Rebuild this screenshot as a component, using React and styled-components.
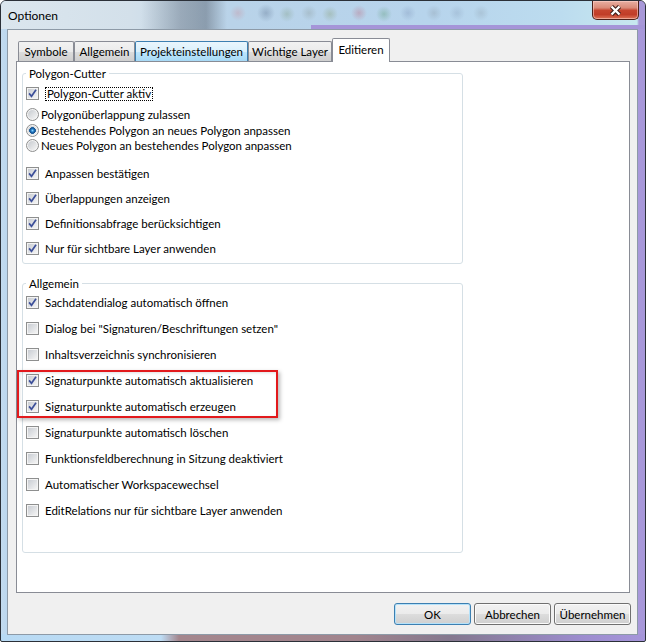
import React from "react";
import styled, { createGlobalStyle } from "styled-components";

const GlobalStyle = createGlobalStyle`
  html, body {
    margin: 0;
    padding: 0;
    background: #ffffff;
  }
  body {
    font-family: Lato, "Noto Sans", "Liberation Sans", sans-serif;
    font-size: 11.5px;
    color: #000;
  }
  *, *::before, *::after {
    box-sizing: border-box;
  }
`;

const tabs = [
  { label: "Symbole", w: 56 },
  { label: "Allgemein", w: 61 },
  { label: "Projekteinstellungen", w: 113, hover: true },
  { label: "Wichtige Layer", w: 84 },
  { label: "Editieren", w: 58, active: true },
];

const radios = [
  { label: "Polygonüberlappung zulassen" },
  { label: "Bestehendes Polygon an neues Polygon anpassen", on: true },
  { label: "Neues Polygon an bestehendes Polygon anpassen" },
];

const cutterChecks = [
  "Anpassen bestätigen",
  "Überlappungen anzeigen",
  "Definitionsabfrage berücksichtigen",
  "Nur für sichtbare Layer anwenden",
];

const generalTop = [
  { label: "Sachdatendialog automatisch öffnen", on: true },
  { label: 'Dialog bei "Signaturen/Beschriftungen setzen"' },
  { label: "Inhaltsverzeichnis synchronisieren" },
];

const generalMarked = [
  { label: "Signaturpunkte automatisch aktualisieren", on: true },
  { label: "Signaturpunkte automatisch erzeugen", on: true },
];

const generalRest = [
  { label: "Signaturpunkte automatisch löschen" },
  { label: "Funktionsfeldberechnung in Sitzung deaktiviert" },
  { label: "Automatischer Workspacewechsel" },
  { label: "EditRelations nur für sichtbare Layer anwenden" },
];

const Check = ({ on }) => (
  <CheckBox>
    {on && (
      <svg width="9" height="9" viewBox="0 0 9 9">
        <path
          d="M1.1 4.4 L3.5 7.3 L8 0.8"
          fill="none"
          stroke="#3c4f99"
          strokeWidth="1.7"
        />
      </svg>
    )}
  </CheckBox>
);

const CheckItem = ({ label, on, h }) => (
  <CheckRow $h={h}>
    <Check on={on} />
    <span>{label}</span>
  </CheckRow>
);

const App = () => {
  return (
    <>
      <GlobalStyle />
      <Window>
        <TitleBar>
          <Title>Optionen</Title>
          <CloseButton>
            <svg width="13" height="11" viewBox="0 0 13 11">
              <path
                d="M2.5 1.5 L10.5 9.5 M10.5 1.5 L2.5 9.5"
                stroke="#3b1d18"
                strokeWidth="4.4"
              />
              <path
                d="M2.5 1.5 L10.5 9.5 M10.5 1.5 L2.5 9.5"
                stroke="#ffffff"
                strokeWidth="2.4"
              />
            </svg>
          </CloseButton>
        </TitleBar>
        <Frame>
          <Client>
            <TabStrip>
              {tabs.map((t) => (
                <Tab key={t.label} $w={t.w} $active={t.active} $hover={t.hover}>
                  {t.label}
                </Tab>
              ))}
            </TabStrip>
            <Panel>
              <Group $pb={2}>
                <Legend>Polygon-Cutter</Legend>
                <CheckRow $h={27}>
                  <Check on />
                  <Focus>Polygon-Cutter aktiv</Focus>
                </CheckRow>
                <RadioList>
                  {radios.map((r) => (
                    <RadioRow key={r.label}>
                      <Radio $on={r.on} />
                      <span>{r.label}</span>
                    </RadioRow>
                  ))}
                </RadioList>
                {cutterChecks.map((label) => (
                  <CheckItem key={label} label={label} on h={25} />
                ))}
              </Group>
              <Group $mt={13} $pb={28}>
                <Legend>Allgemein</Legend>
                {generalTop.map((c) => (
                  <CheckItem key={c.label} {...c} />
                ))}
                <Highlight>
                  {generalMarked.map((c) => (
                    <CheckItem key={c.label} {...c} />
                  ))}
                </Highlight>
                {generalRest.map((c) => (
                  <CheckItem key={c.label} {...c} />
                ))}
              </Group>
            </Panel>
            <ButtonRow>
              <Button $default>OK</Button>
              <Button>Abbrechen</Button>
              <Button>Übernehmen</Button>
            </ButtonRow>
          </Client>
        </Frame>
      </Window>
    </>
  );
};

export default App;

const Window = styled.div`
  width: 646px;
  height: 642px;
  display: flex;
  flex-direction: column;
  border: 1px solid #2b3038;
  border-radius: 6px 6px 2px 2px;
  overflow: hidden;
  background:
    linear-gradient(
        90deg,
        #b8daf4 0,
        #bddcf4 160px,
        #a4868d 178px,
        #a1848d 55%,
        #84788f 70%,
        #9c8cce 90%,
        #a696da 100%
      )
      left bottom / 100% 7px no-repeat,
    linear-gradient(
      90deg,
      #c3dbef 0,
      #bad6ee 7px,
      #b4cde9 50%,
      #a999db calc(100% - 9px),
      #a797d9 100%
    );
`;

const TitleBar = styled.div`
  height: 28px;
  flex: none;
  display: flex;
  align-items: flex-start;
  padding: 0 6px 0 7px;
  background:
    linear-gradient(#a595d8, #a595d8) 310px 24px / 100% 4px no-repeat,
    radial-gradient(circle at 237px 12px, rgba(205, 130, 140, 0.3), transparent 8px),
    radial-gradient(circle at 265px 12px, rgba(70, 90, 120, 0.3), transparent 9px),
    radial-gradient(circle at 286px 13px, rgba(110, 140, 100, 0.28), transparent 8px),
    radial-gradient(circle at 308px 12px, rgba(120, 130, 120, 0.25), transparent 8px),
    radial-gradient(circle at 329px 13px, rgba(120, 140, 80, 0.28), transparent 8px),
    radial-gradient(circle at 358px 12px, rgba(190, 80, 100, 0.3), transparent 8px),
    radial-gradient(circle at 383px 13px, rgba(70, 140, 90, 0.3), transparent 8px),
    radial-gradient(circle at 407px 12px, rgba(110, 130, 170, 0.28), transparent 8px),
    radial-gradient(circle at 433px 12px, rgba(120, 130, 140, 0.25), transparent 8px),
    radial-gradient(circle at 456px 12px, rgba(110, 130, 160, 0.22), transparent 8px),
    radial-gradient(circle at 480px 12px, rgba(120, 130, 140, 0.22), transparent 8px),
    linear-gradient(
      90deg,
      transparent 140px,
      rgba(70, 80, 95, 0.35) 180px,
      rgba(60, 70, 85, 0.4) 205px,
      transparent 226px
    ),
    linear-gradient(
      90deg,
      #dbe6ee 0,
      #d3e0ea 130px,
      #b9d3e9 230px,
      #b7d4ec 430px,
      #bcdcef 560px,
      #c7e8ef 636px,
      #a898d8 638px
    );
`;

const Title = styled.div`
  padding-top: 7px;
  line-height: 15px;
  font-size: 12px;
  color: #000;
`;

const CloseButton = styled.div`
  flex: none;
  margin-left: auto;
  width: 47px;
  height: 19px;
  border: 1px solid #4d2019;
  border-top: none;
  border-radius: 0 0 5px 5px;
  background: linear-gradient(
    #e9afa2 0%,
    #da8a78 38%,
    #c6452f 52%,
    #c13d28 75%,
    #de7458 100%
  );
  box-shadow: inset 0 0 0 1px rgba(255, 215, 205, 0.55);
  display: flex;
  align-items: center;
  justify-content: center;
`;

const Frame = styled.div`
  flex: 1;
  display: flex;
  padding: 0 7px 6px 6px;
`;

const Client = styled.div`
  flex: 1;
  display: flex;
  flex-direction: column;
  background: #f0f0f0;
  border: 1px solid #8d9aa7;
  padding: 8px 7px 9px 8px;
`;

const TabStrip = styled.div`
  height: 23px;
  flex: none;
  display: flex;
  align-items: flex-end;
  padding-left: 2px;
`;

const Tab = styled.div`
  width: ${(p) => p.$w}px;
  height: ${(p) => (p.$active ? 24 : 20)}px;
  margin-bottom: ${(p) => (p.$active ? -1 : 0)}px;
  position: ${(p) => (p.$active ? "relative" : "static")};
  z-index: ${(p) => (p.$active ? 1 : "auto")};
  display: flex;
  align-items: center;
  justify-content: center;
  padding-bottom: ${(p) => (p.$active ? 3 : 0)}px;
  border: 1px solid ${(p) => (p.$hover ? "#3c7fb1" : "#898c95")};
  border-bottom: none;
  border-radius: 2px 2px 0 0;
  white-space: nowrap;
  background: ${(p) =>
    p.$active
      ? "#ffffff"
      : p.$hover
      ? "linear-gradient(#eaf6fd 0%, #d9f0fc 50%, #bee6fd 51%, #a7d9f5 100%)"
      : "linear-gradient(#f2f2f2 0%, #ebebeb 50%, #dddddd 51%, #cfcfcf 100%)"};
`;

const Panel = styled.div`
  flex: 1;
  display: flex;
  flex-direction: column;
  background: #ffffff;
  border: 1px solid #898c95;
  padding: 5px 0 0 5px;
`;

const Group = styled.fieldset`
  width: 441px;
  min-width: 0;
  margin: ${(p) => p.$mt || 0}px 0 0;
  padding: 0 4px ${(p) => p.$pb}px 3px;
  border: 1px solid #d5dfe5;
  border-radius: 3px;
`;

const Legend = styled.legend`
  padding: 0 3px;
  line-height: 13px;
  font-size: 11.5px;
`;

const CheckRow = styled.div`
  height: ${(p) => p.$h || 26}px;
  display: flex;
  align-items: center;
  gap: 6px;
  white-space: nowrap;
`;

const CheckBox = styled.span`
  width: 13px;
  height: 13px;
  flex: none;
  display: flex;
  align-items: center;
  justify-content: center;
  padding: 1px;
  border: 1px solid #8e8f8f;
  background: linear-gradient(135deg, #c9cdd3 0%, #f4f4f4 100%) content-box,
    #f4f4f4;
`;

const Focus = styled.span`
  border: 1px dotted #000;
  padding: 0 1px;
  line-height: 12px;
`;

const RadioList = styled.div`
  display: flex;
  flex-direction: column;
  margin-bottom: 7px;
`;

const RadioRow = styled.div`
  height: 15.5px;
  display: flex;
  align-items: center;
  gap: 2px;
  white-space: nowrap;
`;

const Radio = styled.span`
  width: 13px;
  height: 13px;
  flex: none;
  border-radius: 50%;
  padding: 1px;
  border: 1px solid #8e8f8f;
  background: ${(p) =>
      p.$on
        ? "radial-gradient(circle, #8fd3f8 0, #2c86cf 1.4px, #114a86 2.7px, #2e6ca6 3.2px, transparent 3.6px) content-box, "
        : ""}
    linear-gradient(135deg, #c6cacf 0%, #f6f6f6 100%) content-box, #f4f4f4;
`;

const Highlight = styled.div`
  position: relative;

  &::after {
    content: "";
    position: absolute;
    left: -9px;
    top: 2px;
    bottom: 2px;
    width: 261px;
    border: 2px solid #e2191c;
    box-shadow: 2px 2px 4px rgba(0, 0, 0, 0.28),
      inset 1px 1px 3px rgba(0, 0, 0, 0.12);
    pointer-events: none;
  }
`;

const ButtonRow = styled.div`
  flex: none;
  display: flex;
  justify-content: flex-end;
  gap: 3px;
  margin: 10px -1px 0 0;
`;

const Button = styled.button`
  width: 77px;
  height: 22px;
  padding: 0;
  font: inherit;
  color: #000;
  border: 1px solid ${(p) => (p.$default ? "#3c7fb1" : "#707070")};
  border-radius: 3px;
  background: linear-gradient(#f2f2f2 0%, #ebebeb 50%, #dddddd 51%, #cfcfcf 100%);
  box-shadow: inset 0 0 0 1px ${(p) => (p.$default ? "#b5e2fa" : "#fbfbfb")};
`;
